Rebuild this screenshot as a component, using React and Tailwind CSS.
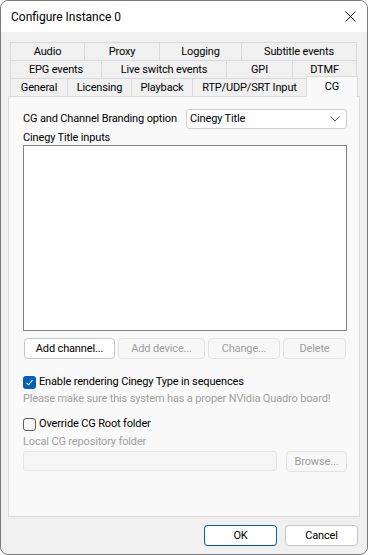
import React from 'react';

const font = { fontFamily: 'Roboto, "Segoe UI", sans-serif' };

function Tab({ label, w, selected }) {
  if (selected) {
    return (
      <div className={`${w} h-[21px] -mt-[3px] -ml-px -mb-px relative z-10 bg-[#f9f9f9] border border-b-0 border-[#d9d9d9] flex items-start justify-center pt-[2px] text-black whitespace-nowrap`}>
        {label}
      </div>
    );
  }
  return (
    <div className={`${w} h-[18px] -ml-px first:ml-0 bg-[#f0f0f0] border border-b-0 border-[#d9d9d9] flex items-center justify-center text-black leading-none whitespace-nowrap`}>
      {label}
    </div>
  );
}

function Btn({ children, w, disabled, primary }) {
  let cls = 'bg-white border-[#c6c6c6] text-black';
  if (disabled) cls = 'bg-[#f7f7f7] border-[#e3e3e3] text-[#9d9d9d]';
  if (primary) cls = 'bg-white border-[#0067c0] border-b-[#00539c] text-black';
  return (
    <div className={`${w} h-[21px] rounded-[4px] border ${cls} flex items-center justify-center leading-none whitespace-nowrap`}>
      {children}
    </div>
  );
}

function Check({ checked }) {
  if (checked) {
    return (
      <div className="w-[13px] h-[13px] shrink-0 rounded-[3px] bg-[#005fb8] flex items-center justify-center">
        <svg width="9" height="9" viewBox="0 0 9 9" fill="none">
          <path d="M1.5 4.8 L3.6 6.8 L7.5 2.2" stroke="white" strokeWidth="1.1" />
        </svg>
      </div>
    );
  }
  return <div className="w-[13px] h-[13px] shrink-0 rounded-[3px] border border-[#5c5c5c] bg-[#f6f6f6]" />;
}

export default function App() {
  return (
    <div style={font} className="w-[368px] h-[555px] flex flex-col bg-[#f0f0f0] border border-[#7a7a7a] rounded-[8px] overflow-hidden text-[11px] tracking-[-0.15px]">
      {/* title bar */}
      <div className="h-[31px] bg-white flex items-center justify-between pl-[10px] pr-[11px]">
        <span className="text-black text-[12px] tracking-normal">Configure Instance 0</span>
        <svg width="11" height="11" viewBox="0 0 11 11">
          <path d="M0.5 0.5 L10.5 10.5 M10.5 0.5 L0.5 10.5" stroke="#1a1a1a" strokeWidth="1" />
        </svg>
      </div>

      <div className="flex-1 flex flex-col pt-[10px] px-[7px]">
        {/* tabs */}
        <div className="pl-[2px] flex flex-col">
          <div className="flex">
            <Tab label="Audio" w="w-[75px]" />
            <Tab label="Proxy" w="w-[76px]" />
            <Tab label="Logging" w="w-[83px]" />
            <Tab label="Subtitle events" w="w-[116px]" />
          </div>
          <div className="flex">
            <Tab label="EPG events" w="w-[92px]" />
            <Tab label="Live switch events" w="w-[126px]" />
            <Tab label="GPI" w="w-[67px]" />
            <Tab label="DTMF" w="w-[65px]" />
          </div>
          <div className="flex items-end">
            <Tab label="General" w="w-[58px]" />
            <Tab label="Licensing" w="w-[65px]" />
            <Tab label="Playback" w="w-[62px]" />
            <Tab label="RTP/UDP/SRT Input" w="w-[115px]" />
            <Tab label="CG" w="w-[52px]" selected />
          </div>
        </div>

        {/* panel */}
        <div className="h-[421px] bg-[#f9f9f9] border border-[#dadada] pl-[14px] pr-[12px] pt-[12px] flex flex-col">
          <div className="flex items-center justify-between h-[20px]">
            <span className="whitespace-nowrap">CG and Channel Branding option</span>
            <div className="w-[161px] h-[20px] bg-white border border-[#cfcfcf] rounded-[3px] flex items-center justify-between pl-[3px] pr-[6px]">
              <span>Cinegy Title</span>
              <svg width="10" height="6" viewBox="0 0 10 6">
                <path d="M0.5 0.5 L5 5 L9.5 0.5" stroke="#5a5a5a" strokeWidth="1" fill="none" />
              </svg>
            </div>
          </div>
          <div className="mt-[1px] h-[15px] leading-[15px] whitespace-nowrap">Cinegy Title inputs</div>
          <div className="h-[186px] bg-white border border-[#828282]" />

          <div className="mt-[7px] flex gap-[3px] pl-[1px]">
            <Btn w="w-[91px]">Add channel...</Btn>
            <Btn w="w-[87px]" disabled>Add device...</Btn>
            <Btn w="w-[72px]" disabled>Change...</Btn>
            <Btn w="w-[63px]" disabled>Delete</Btn>
          </div>

          <div className="mt-[15px] h-[16px] flex items-center gap-[3px]">
            <Check checked />
            <span className="whitespace-nowrap">Enable rendering Cinegy Type in sequences</span>
          </div>
          <div className="mt-[1px] h-[16px] leading-[16px] text-[#a0a0a0] whitespace-nowrap">Please make sure this system has a proper NVidia Quadro board!</div>

          <div className="mt-[9px] h-[16px] flex items-center gap-[3px]">
            <Check />
            <span className="whitespace-nowrap">Override CG Root folder</span>
          </div>
          <div className="mt-[2px] h-[16px] leading-[16px] text-[#a0a0a0] whitespace-nowrap">Local CG repository folder</div>
          <div className="mt-[1px] flex justify-between">
            <div className="w-[254px] h-[20px] bg-[#f5f5f5] border border-[#e5e5e5] rounded-[3px]" />
            <Btn w="w-[61px]" disabled>Browse...</Btn>
          </div>
        </div>

        {/* footer */}
        <div className="mt-[8px] flex justify-end gap-[8px] pr-[2px]">
          <Btn w="w-[73px]" primary>OK</Btn>
          <Btn w="w-[73px]">Cancel</Btn>
        </div>
      </div>
    </div>
  );
}
